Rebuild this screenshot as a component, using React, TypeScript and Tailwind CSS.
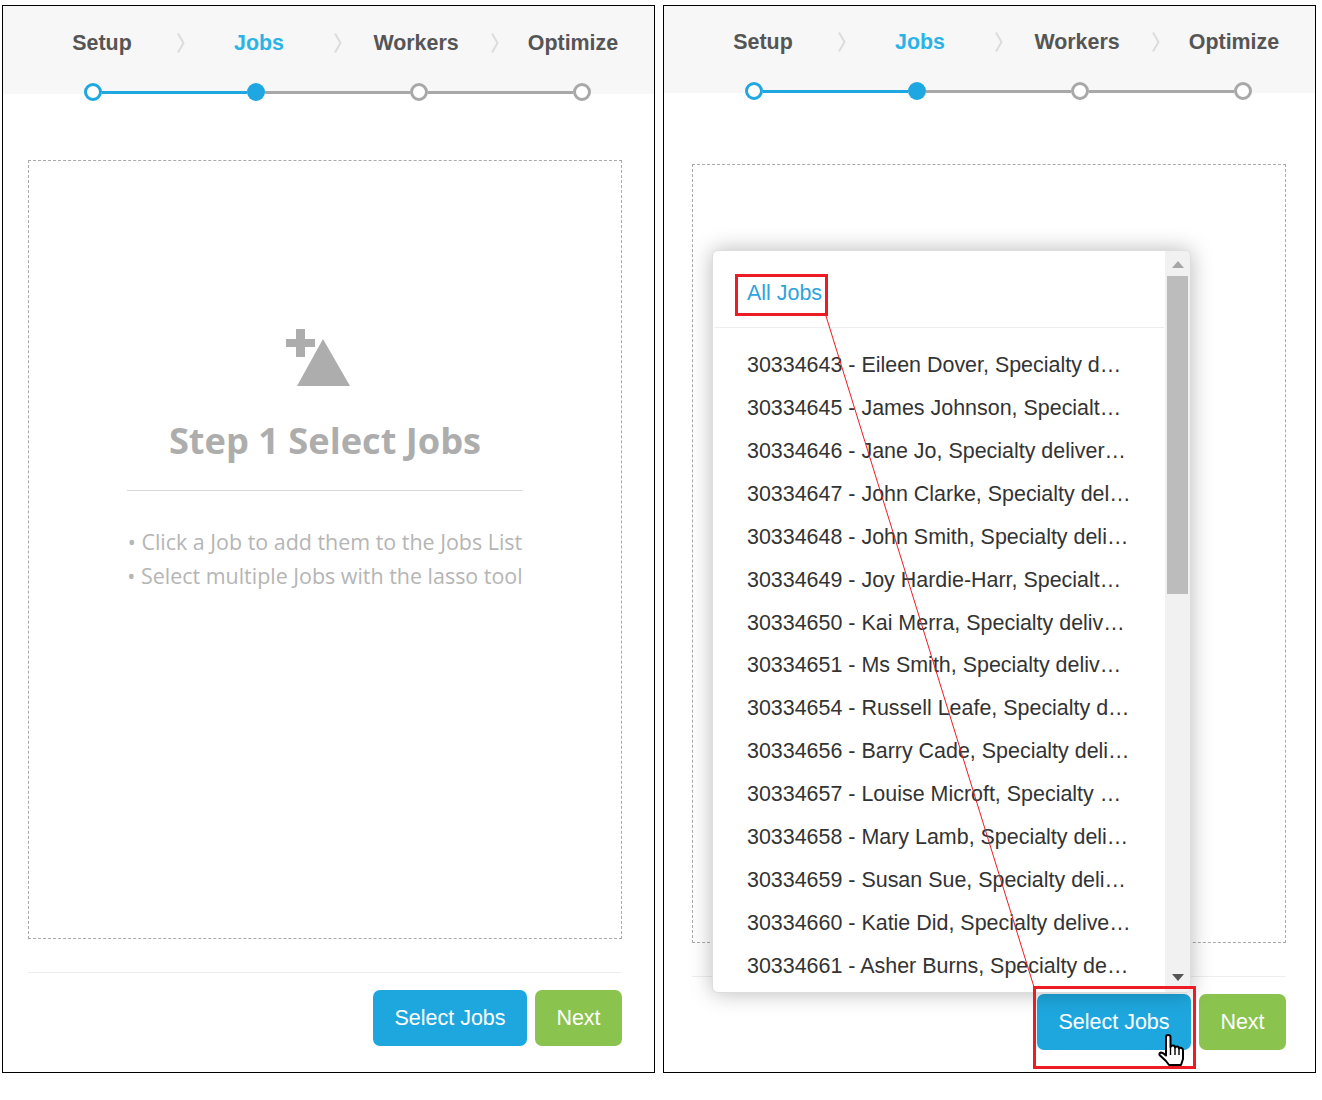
import React from 'react';

const jobs = [
    '30334643 - Eileen Dover, Specialty d…',
    '30334645 - James Johnson, Specialt…',
    '30334646 - Jane Jo, Specialty deliver…',
    '30334647 - John Clarke, Specialty del…',
    '30334648 - John Smith, Specialty deli…',
    '30334649 - Joy Hardie-Harr, Specialt…',
    '30334650 - Kai Merra, Specialty deliv…',
    '30334651 - Ms Smith, Specialty deliv…',
    '30334654 - Russell Leafe, Specialty d…',
    '30334656 - Barry Cade, Specialty deli…',
    '30334657 - Louise Microft, Specialty …',
    '30334658 - Mary Lamb, Specialty deli…',
    '30334659 - Susan Sue, Specialty deli…',
    '30334660 - Katie Did, Specialty delive…',
    '30334661 - Asher Burns, Specialty de…',
];

const steps = ['Setup', 'Jobs', 'Workers', 'Optimize'];

const Chevron = () => (
    <svg width="8" height="20" viewBox="0 0 8 20" fill="none" className="shrink-0">
        <path d="M1 0.5 L6.5 10 L1 19.5" stroke="#dcdcdc" strokeWidth="2" />
    </svg>
);

const StepHeader: React.FC<{ headerClass: string; }> = ({ headerClass }) => (
    <>
        <div className={`bg-[#f7f7f7] pl-[40px] flex items-start ${headerClass}`}>
            {steps.map((step, i) => (
                <React.Fragment key={step}>
                    <div className={`w-[118px] shrink-0 flex justify-center whitespace-nowrap text-[21.4px] leading-[24px] font-bold ${i === 1 ? 'text-[#2cb3e6]' : 'text-[#555555]'}`}>
                        {step}
                    </div>
                    {i < 3 && (
                        <div className="w-[39px] shrink-0 flex justify-center pt-[2px]">
                            <Chevron />
                        </div>
                    )}
                </React.Fragment>
            ))}
        </div>
        <div className="relative -mt-[11px] ml-[81px] w-[507px] h-[18px] flex items-center">
            <div className="w-[18px] h-[18px] shrink-0 rounded-full border-[3px] border-[#1ea7e0] bg-white" />
            <div className="flex-1 h-[3px] bg-[#1ea7e0]" />
            <div className="w-[18px] h-[18px] shrink-0 rounded-full bg-[#1ea7e0]" />
            <div className="flex-1 h-[3px] bg-[#a8a8a8]" />
            <div className="w-[18px] h-[18px] shrink-0 rounded-full border-[3px] border-[#a8a8a8] bg-white" />
            <div className="flex-1 h-[3px] bg-[#a8a8a8]" />
            <div className="w-[18px] h-[18px] shrink-0 rounded-full border-[3px] border-[#a8a8a8] bg-white" />
        </div>
    </>
);

const Footer = () => (
    <>
        <div className="mt-[33px] h-px bg-[#eeeeee]" />
        <div className="mt-[17px] flex justify-end gap-[8px]">
            <button className="w-[154px] h-[56px] pt-[1px] rounded-[7px] bg-[#1ea7de] text-white text-[21.5px]">Select Jobs</button>
            <button className="w-[87px] h-[56px] pt-[1px] rounded-[7px] bg-[#8bc34f] text-white text-[21.5px]">Next</button>
        </div>
    </>
);

const LeftPanel = () => (
    <div className="w-[653px] h-[1068px] shrink-0 border border-black">
        <StepHeader headerClass="h-[88px] pt-[25px]" />
        <div className="pl-[25px] pr-[32px]">
            <div className="mt-[59px] h-[779px] border border-dashed border-[#aaaaaa] flex flex-col items-center pt-[168px] font-['Open_Sans',sans-serif]">
                <svg width="64" height="57" viewBox="0 0 64 57" fill="#adadad" className="-ml-[14px]">
                    <path d="M10 0 H19 V10 H29 V18 H19 V28 H10 V18 H0 V10 H10 Z" />
                    <path d="M37 10 L64 57 H11 Z" />
                </svg>
                <h2 className="mt-[30px] text-[36.2px] leading-[48px] font-bold text-[#adadad] whitespace-nowrap">Step 1 Select Jobs</h2>
                <div className="mt-[26px] w-[396px] h-px bg-[#d9d9d9]" />
                <div className="mt-[34px] w-[396px] text-[21.45px] leading-[33.5px] text-[#b5b5b5] whitespace-nowrap flex flex-col items-center">
                    <p>• Click a Job to add them to the Jobs List</p>
                    <p>• Select multiple Jobs with the lasso tool</p>
                </div>
            </div>
            <Footer />
        </div>
    </div>
);

const JobsMenu = () => (
    <div className="absolute left-[48px] top-[244px] z-10 w-[479px] h-[743px] flex rounded-[6px] border border-[#dddddd] bg-white shadow-[0_0_22px_rgba(0,0,0,0.28)] overflow-hidden text-[21.45px]">
        <div className="flex-1 min-w-0">
            <div className="h-[77px] mx-px border-b border-[#eeeeee] pl-[33px] pt-[29px] leading-[26px] text-[#2ea3dc]">All Jobs</div>
            <ul className="pt-[16px] pl-[34px] text-[#333333] whitespace-nowrap">
                {jobs.map((job) => (
                    <li key={job} className="h-[42.93px] leading-[42.93px]">{job}</li>
                ))}
            </ul>
        </div>
        <div className="w-[25px] shrink-0 bg-[#f1f1f1] flex flex-col items-center">
            <svg width="12" height="7" viewBox="0 0 12 7" fill="#a6a6a6" className="mt-[10px]"><path d="M6 0 L12 7 H0 Z" /></svg>
            <div className="mt-[8px] w-[21px] h-[318px] bg-[#bcbcbc]" />
            <svg width="12" height="7" viewBox="0 0 12 7" fill="#555555" className="mt-[380px]"><path d="M0 0 H12 L6 7 Z" /></svg>
        </div>
    </div>
);

const RightPanel = () => (
    <div className="relative w-[653px] h-[1068px] shrink-0 border border-black">
        <StepHeader headerClass="h-[87px] pt-[24px]" />
        <div className="pl-[28px] pr-[29px]">
            <div className="mt-[64px] h-[779px] border border-dashed border-[#aaaaaa]" />
            <Footer />
        </div>
        <JobsMenu />
    </div>
);

const App: React.FC = () => {
    return (
        <div className="relative w-[1322px] h-[1100px] bg-white overflow-hidden font-['Liberation_Sans',Arial,sans-serif]">
            <div className="flex gap-[8px] pl-[2px] pt-[5px]">
                <LeftPanel />
                <RightPanel />
            </div>

            {/* callout annotations on top of the screenshot */}
            <div className="absolute z-20 left-[735px] top-[274px] w-[93px] h-[42px] border-[3px] border-[#ed1c24]" />
            <div className="absolute z-20 left-[1033px] top-[986px] w-[163px] h-[83px] border-[3px] border-[#ed1c24]" />
            <svg className="absolute z-20 left-0 top-0" width="1322" height="1100" fill="none">
                <line x1="826" y1="316" x2="1034" y2="987" stroke="#ed1c24" strokeWidth="1" />
            </svg>
            <svg className="absolute z-30 left-[1158px] top-[1034px]" width="27" height="33" viewBox="0 0 27 33">
                <path
                    d="M8 3 Q8 1 10 1 Q12.5 1 12.5 3 V13 Q13 11.5 15 11.5 Q17 11.5 17 13.5 Q17.5 12.5 19 12.5 Q21 12.5 21 14.5 Q22 13.5 23.5 14 Q25 14.5 25 16.5 V25 L23 31 H11 L8 27 L1.5 21 Q1 19 3 18.5 Q5 18.5 8 21.5 Z"
                    fill="#ffffff"
                    stroke="#000000"
                    strokeWidth="2"
                    strokeLinejoin="round"
                />
                <path d="M12.5 13 V21 M17 13.5 V21 M21 14.5 V21" stroke="#000000" strokeWidth="1.4" fill="none" />
            </svg>
        </div>
    );
};

export default App;
